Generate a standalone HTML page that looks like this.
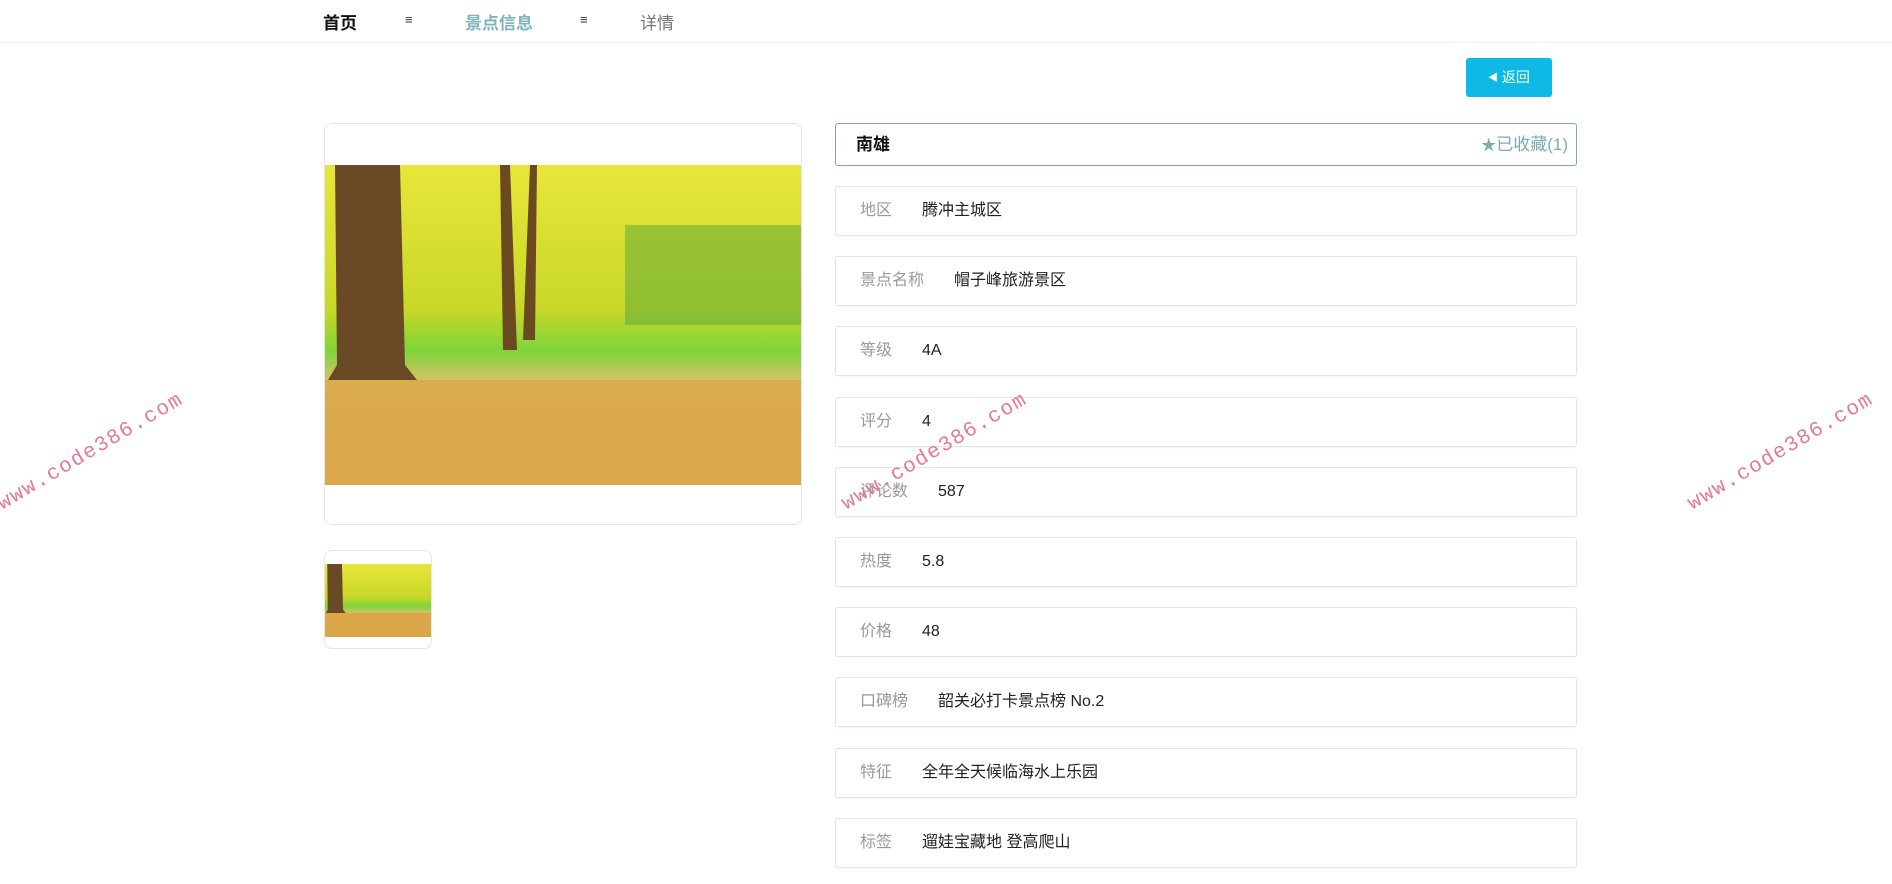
<!DOCTYPE html>
<html><head><meta charset="utf-8"><style>
*{margin:0;padding:0;box-sizing:border-box}
body{width:1892px;height:884px;overflow:hidden;background:#fff;font-family:"Liberation Sans","Noto Sans CJK SC",sans-serif;position:relative}
.nav{position:absolute;left:0;top:0;width:1892px;height:43px;border-bottom:1px solid #eee}
.nav span{position:absolute;top:9px;font-size:17px}
.btn{position:absolute;left:1466px;top:58px;width:86px;height:39px;background:#0fb9e6;border-radius:3px;color:#fff;font-size:14px;line-height:39px;text-align:center}
.card{position:absolute;left:324px;top:123px;width:478px;height:402px;border:1px solid #e6e6e6;border-radius:8px;overflow:hidden}
.thumb{position:absolute;left:324px;top:550px;width:108px;height:99px;border:1px solid #e6e6e6;border-radius:8px;overflow:hidden}
.row{position:absolute;left:835px;width:742px;height:50px;border:1px solid #e4e4e4;border-radius:3px;box-shadow:0 1px 2px rgba(0,0,0,.04);font-size:16px;line-height:48px;padding-left:24px;color:#222}
.row b{font-weight:normal;color:#999;margin-right:30px}
.title{position:absolute;left:835px;top:123px;width:742px;height:43px;border:1px solid #7fa9ab;border-radius:3px;line-height:41px;padding-left:20px;font-size:17px;font-weight:bold;color:#111}
.fav{position:absolute;right:8px;top:0;font-weight:normal;color:#7aadb0;font-size:17px}
.wm{position:absolute;font-family:"Liberation Mono",monospace;font-size:21px;letter-spacing:1.5px;color:#e47a98;transform-origin:0 0;transform:rotate(-30.5deg);white-space:nowrap}
</style></head><body>
<div class="nav">
<span style="left:323px;font-weight:bold;color:#111">首页</span>
<span style="left:405px;font-size:13px;top:12px;color:#333">≡</span>
<span style="left:465px;font-weight:bold;color:#7fb3ba">景点信息</span>
<span style="left:580px;font-size:13px;top:12px;color:#333">≡</span>
<span style="left:640px;color:#777">详情</span>
</div>
<div class="btn"><span style="font-size:10px;vertical-align:1px">◀</span> 返回</div>
<div class="card">
<svg width="478" height="320" style="position:absolute;left:0;top:41px" viewBox="0 0 478 320" preserveAspectRatio="none">
<defs><linearGradient id="g" x1="0" y1="0" x2="0" y2="1"><stop offset="0" stop-color="#e8e63a"/><stop offset=".45" stop-color="#c8d828"/><stop offset=".58" stop-color="#7fd43a"/><stop offset=".68" stop-color="#d9c26a"/><stop offset="1" stop-color="#d9a84a"/></linearGradient></defs>
<rect width="478" height="320" fill="url(#g)"/>
<rect x="300" y="60" width="178" height="100" fill="#5aa53a" opacity=".5"/>
<path d="M10 0 L75 0 L80 200 L92 215 L3 215 L12 200Z" fill="#6a4a26"/>
<path d="M175 0 L185 0 L192 185 L178 185Z M205 0 L212 0 L210 175 L198 175Z" fill="#6b4a22"/>
<path d="M0 215 L478 215 L478 320 L0 320Z" fill="#dba64a" opacity=".8"/>
</svg></div>
<div class="thumb">
<svg width="108" height="73" style="position:absolute;left:0;top:13px" viewBox="0 0 478 320" preserveAspectRatio="none">
<rect width="478" height="320" fill="url(#g)"/>
<path d="M10 0 L75 0 L80 200 L92 215 L3 215 L12 200Z" fill="#6a4a26"/>
<path d="M0 215 L478 215 L478 320 L0 320Z" fill="#dba64a"/>
</svg></div>
<div class="title">南雄<span class="fav"><span style="font-size:15px">★</span>已收藏(1)</span></div>
<div class="row" style="top:186px"><b>地区</b>腾冲主城区</div>
<div class="row" style="top:256px"><b>景点名称</b>帽子峰旅游景区</div>
<div class="row" style="top:326px"><b>等级</b>4A</div>
<div class="row" style="top:397px"><b>评分</b>4</div>
<div class="row" style="top:467px"><b>评论数</b>587</div>
<div class="row" style="top:537px"><b>热度</b>5.8</div>
<div class="row" style="top:607px"><b>价格</b>48</div>
<div class="row" style="top:677px"><b>口碑榜</b>韶关必打卡景点榜 No.2</div>
<div class="row" style="top:748px"><b>特征</b>全年全天候临海水上乐园</div>
<div class="row" style="top:818px"><b>标签</b>遛娃宝藏地 登高爬山</div>
<div class="wm" style="left:-6px;top:496px">www.code386.com</div>
<div class="wm" style="left:838px;top:496px">www.code386.com</div>
<div class="wm" style="left:1684px;top:496px">www.code386.com</div>
</body></html>
